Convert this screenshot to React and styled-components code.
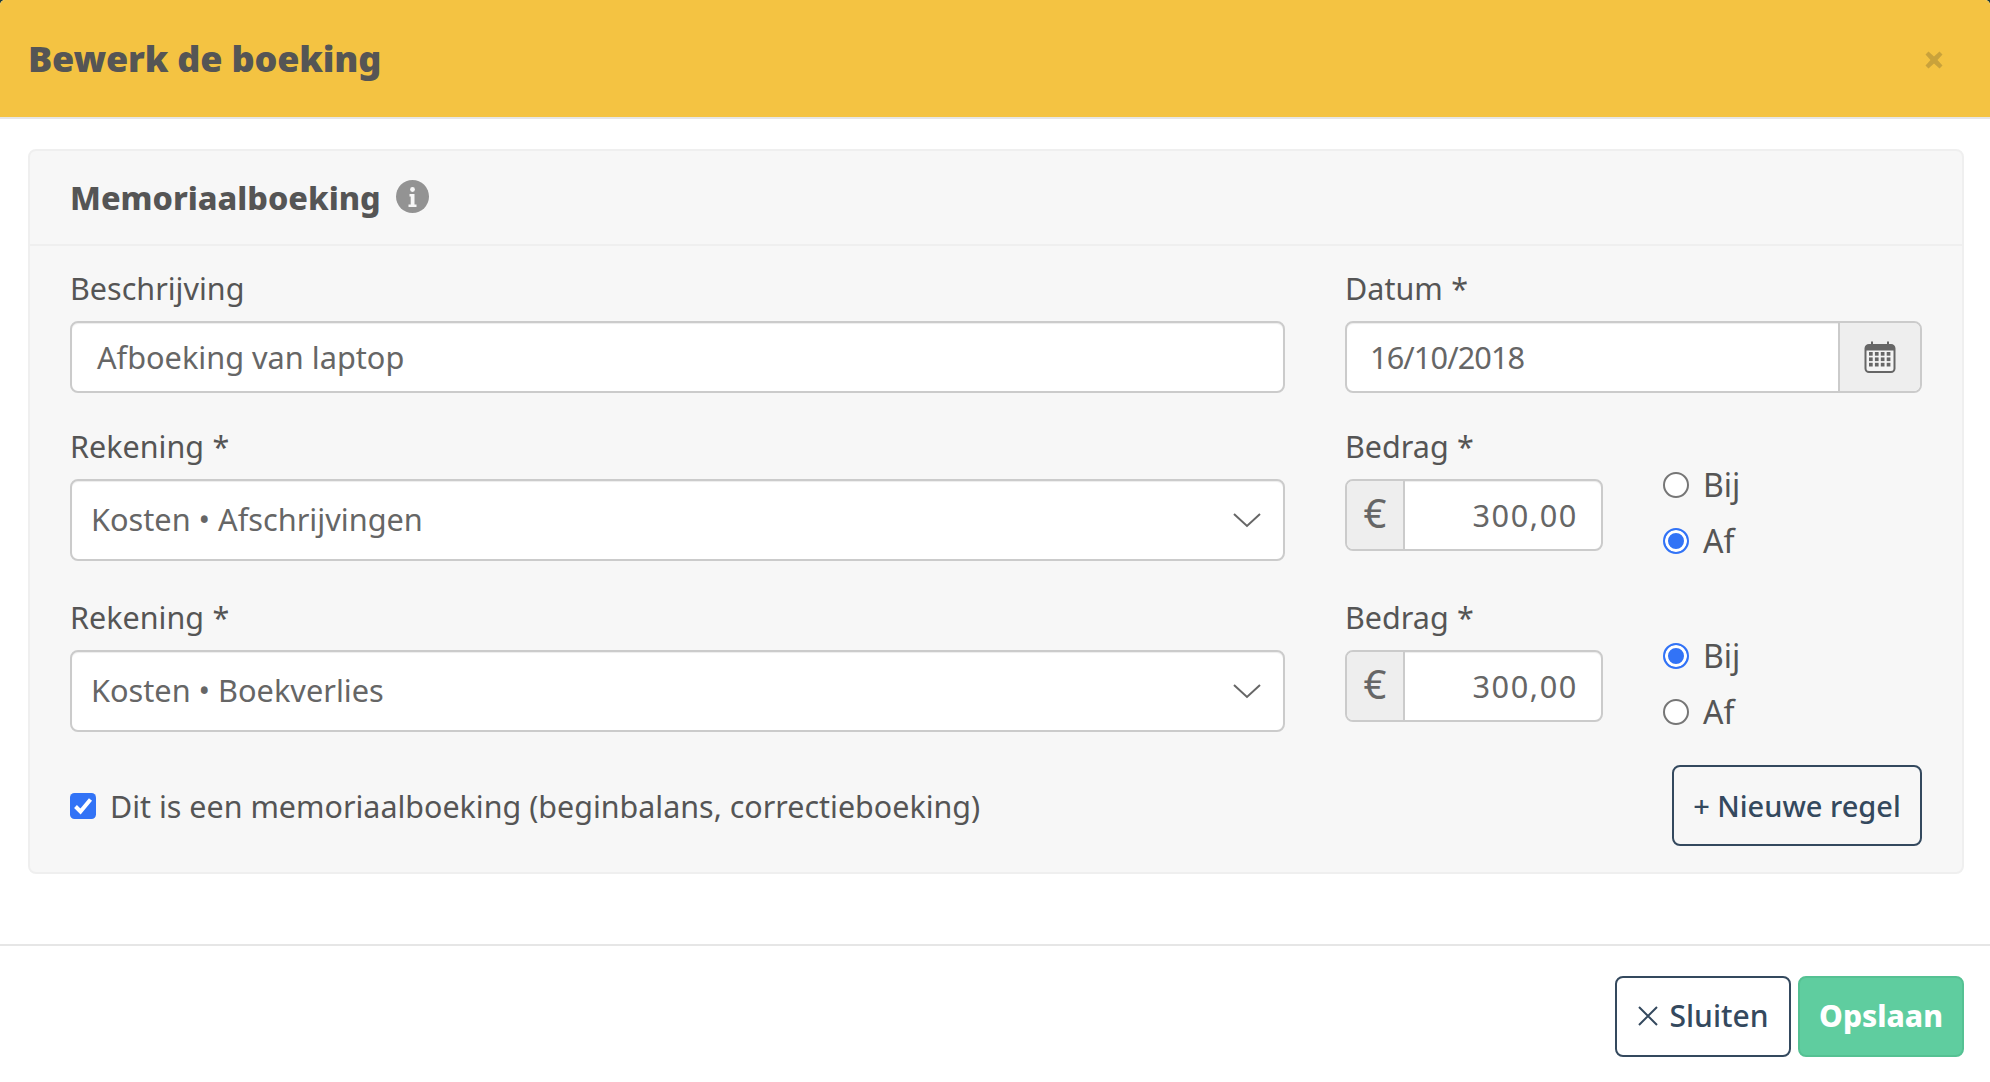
import React from 'react'
import styled, { createGlobalStyle } from 'styled-components'

const FONT = '"Noto Sans", "Open Sans", sans-serif'

export default function App() {
  return (
    <>
      <GlobalStyle />
      <Modal>
        <ModalHeader>
          <ModalTitle>Bewerk de boeking</ModalTitle>
          <CloseIcon viewBox="0 0 18 18" aria-hidden="true">
            <path d="M0.500 3.500 3.500 0.500 9 5.500 14.500 0.500 17.500 3.500 12.500 9 17.500 14.500 14.500 17.500 9 12.500 3.500 17.500 0.500 14.500 5.500 9Z" />
          </CloseIcon>
        </ModalHeader>

        <ModalBody>
          <Card>
            <CardHeader>
              <CardTitle>Memoriaalboeking</CardTitle>
              <InfoIcon viewBox="0 0 33 33" aria-hidden="true">
                <circle cx="16.5" cy="16.5" r="16.5" fill="#939393" />
                <circle cx="16.5" cy="9.5" r="2.4" fill="#f7f7f7" />
                <path d="M13.5 14h5v10.5h2V27h-8v-2.5h2.2V16.5h-1.200Z" fill="#f7f7f7" />
              </InfoIcon>
            </CardHeader>
            <CardBody>
              <FormRow $gap={30}>
                <MainColumn>
                  <FieldLabel>Beschrijving</FieldLabel>
                  <TextBox>Afboeking van laptop</TextBox>
                </MainColumn>
                <SideColumn>
                  <FieldLabel>Datum *</FieldLabel>
                  <DateGroup>
                    <DateValue>16/10/2018</DateValue>
                    <DateAddon>
                      <CalendarIcon />
                    </DateAddon>
                  </DateGroup>
                </SideColumn>
              </FormRow>

              <BookingLine account="Kosten • Afschrijvingen" side="af" />
              <BookingLine account="Kosten • Boekverlies" side="bij" />

              <ActionRow>
                <CheckLabel>
                  <CheckBox viewBox="0 0 26 26" aria-hidden="true">
                    <rect width="26" height="26" rx="4.500" fill="#3273f6" />
                    <path d="M5.500 13.500 10.500 18.500 20.500 6.500" fill="none" stroke="#fff" strokeWidth="4" />
                  </CheckBox>
                  Dit is een memoriaalboeking (beginbalans, correctieboeking)
                </CheckLabel>
                <NewLineButton type="button">+ Nieuwe regel</NewLineButton>
              </ActionRow>
            </CardBody>
          </Card>
        </ModalBody>

        <ModalFooter>
          <OutlineButton type="button">
            <svg width="22" height="22" viewBox="0 0 22 22" aria-hidden="true">
              <path d="M2 2 20 20M20 2 2 20" stroke="#34495e" strokeWidth="2" fill="none" />
            </svg>
            Sluiten
          </OutlineButton>
          <SaveButton type="button">Opslaan</SaveButton>
        </ModalFooter>
      </Modal>
    </>
  )
}

function BookingLine({ account, side }) {
  return (
    <FormRow $gap={33}>
      <MainColumn>
        <FieldLabel>Rekening *</FieldLabel>
        <SelectBox>
          {account}
          <svg width="30" height="18" viewBox="0 0 30 18" aria-hidden="true">
            <path d="M2 3 15 15 28 3" fill="none" stroke="#666" strokeWidth="2" />
          </svg>
        </SelectBox>
      </MainColumn>
      <SideColumn>
        <FieldLabel>Bedrag *</FieldLabel>
        <AmountRow>
          <AmountGroup>
            <EuroAddon>€</EuroAddon>
            <AmountValue>300,00</AmountValue>
          </AmountGroup>
          <RadioGroup>
            <RadioOption>
              <Radio $checked={side === 'bij'} />
              Bij
            </RadioOption>
            <RadioOption>
              <Radio $checked={side === 'af'} />
              Af
            </RadioOption>
          </RadioGroup>
        </AmountRow>
      </SideColumn>
    </FormRow>
  )
}

function CalendarIcon() {
  const cells = []
  for (let row = 0; row < 3; row++) {
    for (let col = 0; col < 4; col++) {
      cells.push(<rect key={`${row}-${col}`} x={5 + col * 5.9} y={11 + row * 5.4} width="3.700" height="3.700" fill="#666" />)
    }
  }
  return (
    <svg width="32" height="32" viewBox="0 0 32 32" aria-hidden="true">
      <rect x="1.500" y="4" width="29" height="27" rx="3.500" fill="#f4f4f4" stroke="#666" strokeWidth="2" />
      <path d="M1.500 9.500V7a3 3 0 0 1 3-3h23a3 3 0 0 1 3 3v2.500Z" fill="#666" />
      <path d="M8 0.500v4M24 0.500v4" stroke="#666" strokeWidth="2" />
      {cells}
    </svg>
  )
}

const GlobalStyle = createGlobalStyle`
  html, body {
    margin: 0;
    height: 100%;
    background: #1f3b34;
  }
  body {
    font-family: ${FONT};
    color: #555;
  }
`

const Modal = styled.div`
  display: flex;
  flex-direction: column;
  height: 1082px;
  background: #fff;
  border-radius: 5px 5px 0 0;
  overflow: hidden;
`

const ModalHeader = styled.header`
  display: flex;
  align-items: center;
  justify-content: space-between;
  height: 117px;
  padding: 0 47px 0 28px;
  background: #f4c342;
  border-bottom: 2px solid #e6e6e6;
  box-sizing: content-box;
`

const ModalTitle = styled.h1`
  margin: 0;
  font-size: 36px;
  font-weight: 900;
  letter-spacing: -0.2px;
  color: #555;
`

const CloseIcon = styled.svg`
  width: 18px;
  height: 18px;
  margin-top: 3px;
  fill: #c9a23b;
`

const ModalBody = styled.main`
  padding: 30px 26px 0 28px;
  height: 825px;
  box-sizing: border-box;
  flex: none;
`

const Card = styled.section`
  height: 725px;
  box-sizing: border-box;
  background: #f7f7f7;
  border: 2px solid #efefef;
  border-radius: 8px;
`

const CardHeader = styled.div`
  display: flex;
  align-items: center;
  gap: 15px;
  height: 95px;
  box-sizing: border-box;
  padding: 0 40px;
  border-bottom: 2px solid #efefef;
`

const CardTitle = styled.h2`
  margin: 0 0 2px;
  font-size: 32.4px;
  font-weight: 800;
  color: #555;
`

const InfoIcon = styled.svg`
  width: 33px;
  height: 33px;
  margin-bottom: 2px;
`

const CardBody = styled.div`
  padding: 19px 40px 0;
`

const FormRow = styled.div`
  display: flex;
  gap: 60px;
  margin-bottom: ${p => p.$gap}px;
`

const MainColumn = styled.div`
  width: 1215px;
`

const SideColumn = styled.div`
  width: 577px;
`

const FieldLabel = styled.div`
  font-size: 30.5px;
  line-height: 46px;
  height: 56px;
  word-spacing: 0.5px;
  color: #555;
`

const fieldBase = `
  box-sizing: border-box;
  background: #fff;
  border: 2px solid #cbcbcb;
  border-radius: 8px;
  box-shadow: inset 0 1px 1px rgba(0, 0, 0, 0.075);
  color: #666;
  font-size: 30.7px;
`

const TextBox = styled.div`
  ${fieldBase}
  height: 72px;
  line-height: 68px;
  padding: 0 25px;
`

const SelectBox = styled.div`
  ${fieldBase}
  display: flex;
  align-items: center;
  justify-content: space-between;
  height: 82px;
  padding: 0 21px 2px 19px;
  svg {
    margin-top: 2px;
  }
`

const DateGroup = styled.div`
  ${fieldBase}
  display: flex;
  height: 72px;
  overflow: hidden;
`

const DateValue = styled.div`
  flex: 1;
  line-height: 68px;
  padding: 0 23px;
  letter-spacing: -0.9px;
`

const DateAddon = styled.div`
  display: flex;
  align-items: center;
  justify-content: center;
  width: 80px;
  background: #eeeeee;
  border-left: 2px solid #cbcbcb;
`

const AmountRow = styled.div`
  display: flex;
  gap: 60px;
`

const AmountGroup = styled.div`
  ${fieldBase}
  display: flex;
  width: 258px;
  height: 72px;
  overflow: hidden;
`

const EuroAddon = styled.div`
  width: 56px;
  text-align: center;
  background: #eeeeee;
  border-right: 2px solid #cbcbcb;
  font-size: 40px;
  line-height: 64px;
`

const AmountValue = styled.div`
  flex: 1;
  text-align: right;
  padding-right: 23px;
  line-height: 68px;
  letter-spacing: 1.6px;
`

const RadioGroup = styled.div`
  display: flex;
  flex-direction: column;
  gap: 20px;
  margin-top: -12.5px;
`

const RadioOption = styled.label`
  display: flex;
  align-items: center;
  gap: 14px;
  height: 36px;
  font-size: 32px;
  color: #555;
`

const Radio = styled.span`
  box-sizing: border-box;
  width: 26px;
  height: 26px;
  border-radius: 50%;
  border: 2px solid ${p => (p.$checked ? '#3273f6' : '#767676')};
  background: ${p => (p.$checked ? '#3273f6' : '#fff')};
  box-shadow: ${p => (p.$checked ? 'inset 0 0 0 3px #fff' : 'none')};
`

const ActionRow = styled.div`
  display: flex;
  align-items: center;
  justify-content: space-between;
  margin-top: 4px;
`

const CheckLabel = styled.label`
  display: flex;
  align-items: center;
  gap: 14px;
  font-size: 30.45px;
  color: #555;
`

const CheckBox = styled.svg`
  width: 26px;
  height: 26px;
`

const buttonBase = `
  box-sizing: border-box;
  height: 81px;
  border-radius: 8px;
  font-family: ${FONT};
`

const NewLineButton = styled.button`
  ${buttonBase}
  width: 250px;
  padding: 0;
  background: transparent;
  border: 2px solid #34495e;
  color: #34495e;
  font-size: 29px;
  font-weight: 500;
`

const ModalFooter = styled.footer`
  display: flex;
  justify-content: flex-end;
  gap: 7px;
  flex: 1;
  padding: 30px 26px 0 0;
  border-top: 2px solid #e6e6e6;
`

const OutlineButton = styled.button`
  ${buttonBase}
  display: flex;
  align-items: center;
  justify-content: center;
  gap: 10px;
  width: 176px;
  padding: 0 0 2px;
  background: #fff;
  border: 2px solid #34495e;
  color: #34495e;
  font-size: 30px;
  font-weight: 500;
`

const SaveButton = styled.button`
  ${buttonBase}
  width: 166px;
  padding: 0 0 2px;
  background: #5fcd9f;
  border: 2px solid #55c193;
  color: #fff;
  font-size: 30px;
  font-weight: 800;
`
